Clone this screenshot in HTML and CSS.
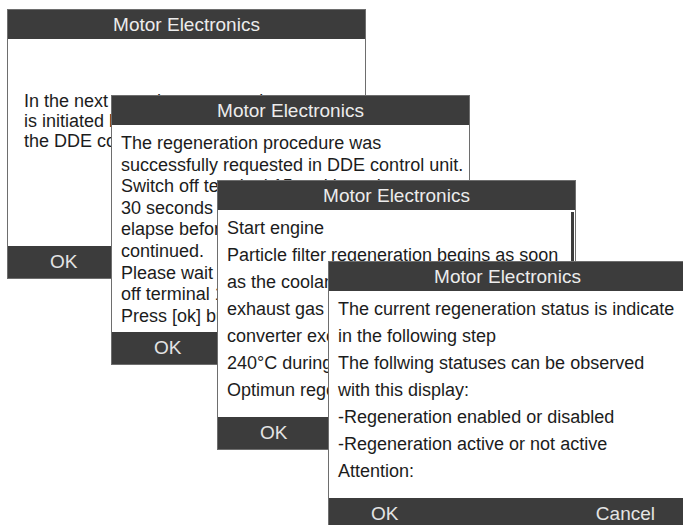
FILE: index.html
```html
<!DOCTYPE html>
<html>
<head>
    <title>Motor Electronics</title>
    <link rel="stylesheet" href="styles.css">
</head>
<body>
    <div class="desk">

        <div class="win win-1">
            <div class="win-title">Motor Electronics</div>
            <div class="win-body">
                <p>In the next step the regeneration</p>
                <p>is initiated by a request to</p>
                <p>the DDE control unit.</p>
            </div>
            <div class="win-foot"><span>OK</span></div>
        </div>

        <div class="win win-2">
            <div class="win-title">Motor Electronics</div>
            <div class="win-body">
                <p>The regeneration procedure was</p>
                <p>successfully requested in DDE control unit.</p>
                <p>Switch off terminal 15 and let at least</p>
                <p>30 seconds of the after-run time</p>
                <p>elapse before the procedure is</p>
                <p>continued.</p>
                <p>Please wait 30 seconds after switching</p>
                <p>off terminal 15.</p>
                <p>Press [ok] button to continue.</p>
            </div>
            <div class="win-foot"><span>OK</span></div>
        </div>

        <div class="win win-3">
            <div class="win-title">Motor Electronics</div>
            <div class="win-body">
                <p>Start engine</p>
                <p>Particle filter regeneration begins as soon</p>
                <p>as the coolant temperature exceeds 70°C,</p>
                <p>exhaust gas temperature upstream of</p>
                <p>converter exceeds approximately</p>
                <p>240°C during the regeneration.</p>
                <p>Optimun regeneration at idle speed.</p>
                <div class="scroll-thumb"></div>
            </div>
            <div class="win-foot"><span>OK</span></div>
        </div>

        <div class="win win-4">
            <div class="win-title">Motor Electronics</div>
            <div class="win-body">
                <p>The current regeneration status is indicate</p>
                <p>in the following step</p>
                <p>The follwing statuses can be observed</p>
                <p>with this display:</p>
                <p>-Regeneration enabled or disabled</p>
                <p>-Regeneration active or not active</p>
                <p>Attention:</p>
            </div>
            <div class="win-foot"><span>OK</span><span>Cancel</span></div>
        </div>

    </div>
</body>
</html>
```
FILE: styles.css
```css
html, body {
    margin: 0;
    padding: 0;
    background-color: #fff;
    overflow: hidden;
}
.desk {
    position: relative;
    width: 683px;
    height: 525px;
    font-family: "Liberation Sans", Arial, sans-serif;
    color: #1c1c1c;
}
.win {
    position: absolute;
    width: 359px;
    height: 270px;
    box-sizing: border-box;
    border: 1px solid #6e6e6e;
    background-color: #fff;
    display: flex;
    flex-direction: column;
}
.win-1 { left: 7px;   top: 9px; }
.win-2 { left: 111px; top: 95px; }
.win-3 { left: 217px; top: 180px; }
.win-4 { left: 328px; top: 261px; }

.win-title {
    height: 29px;
    line-height: 30px;
    background-color: #3c3c3c;
    color: #ececec;
    font-size: 19px;
    text-align: center;
    white-space: nowrap;
}
.win-body {
    position: relative;
    flex: 1;
    overflow: hidden;
    padding: 5px 10px 0 9px;
    font-size: 18px;
    line-height: 27px;
}
.win-body p {
    margin: 0;
    white-space: nowrap;
}
.win-1 .win-body {
    padding-top: 52px;
    padding-left: 16px;
    line-height: 20px;
}
.win-2 .win-body {
    padding-top: 8px;
    line-height: 21.6px;
}
.win-foot {
    height: 32px;
    line-height: 32px;
    background-color: #3c3c3c;
    color: #e4e4e4;
    font-size: 19px;
    display: flex;
    justify-content: space-between;
    padding: 0 31px 0 42px;
}
.scroll-thumb {
    position: absolute;
    top: 2px;
    right: 1px;
    width: 3px;
    height: 90px;
    background-color: #3c3c3c;
}
```
